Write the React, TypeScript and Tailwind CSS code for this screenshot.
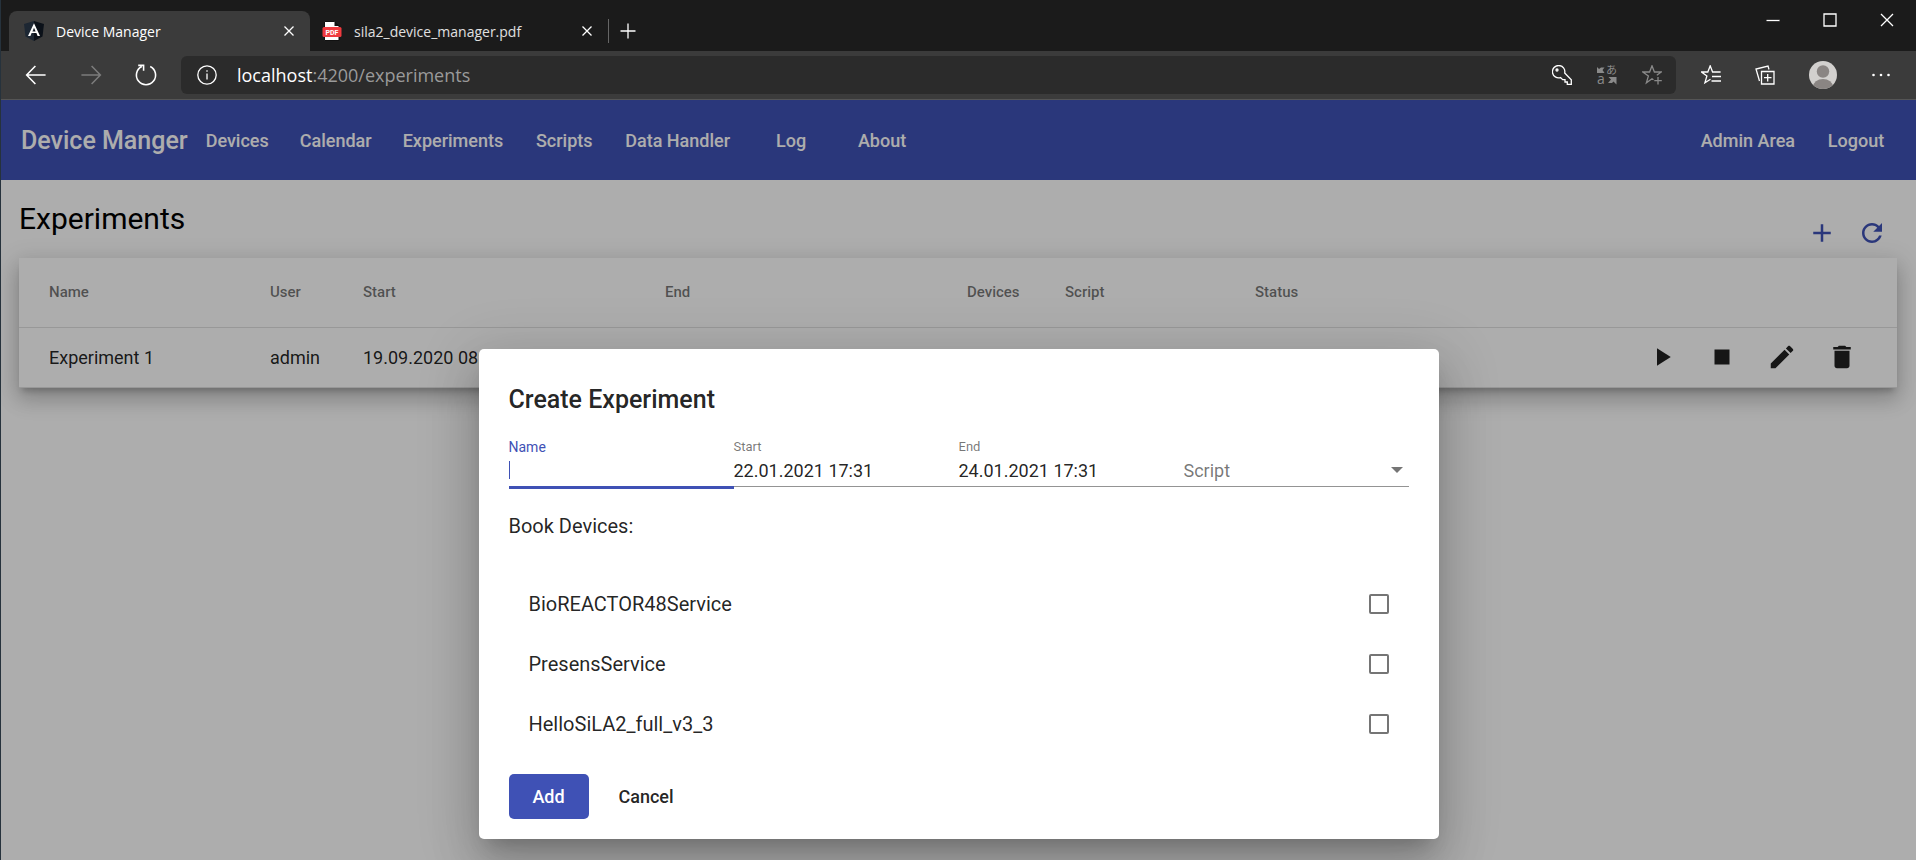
import type { ReactNode } from "react";

const ICONS = {
  add: "M19 13h-6v6h-2v-6H5v-2h6V5h2v6h6v2z",
  refresh:
    "M17.65 6.35C16.2 4.9 14.21 4 12 4c-4.42 0-7.99 3.58-7.99 8s3.57 8 7.99 8c3.73 0 6.84-2.55 7.73-6h-2.08c-.82 2.33-3.04 4-5.65 4-3.31 0-6-2.69-6-6s2.69-6 6-6c1.66 0 3.14.69 4.22 1.78L13 11h7V4l-2.35 2.35z",
  play: "M8 5v14l11-7z",
  stop: "M6 6h12v12H6z",
  edit: "M3 17.25V21h3.75L17.81 9.94l-3.75-3.75L3 17.25zM20.71 7.04c.39-.39.39-1.02 0-1.41l-2.34-2.34c-.39-.39-1.02-.39-1.41 0l-1.83 1.83 3.75 3.75 1.83-1.83z",
  remove: "M6 19c0 1.1.9 2 2 2h8c1.1 0 2-.9 2-2V7H6v12zM19 4h-3.5l-1-1h-5l-1 1H5v2h14V4z",
};

function MatIconButton({ icon, label }: { icon: keyof typeof ICONS; label: string }) {
  return (
    <button type="button" aria-label={label} className="flex size-[50px] items-center justify-center rounded-full">
      <svg viewBox="0 0 24 24" className="size-[30px] fill-current">
        <path d={ICONS[icon]} />
      </svg>
    </button>
  );
}

function Stroke({ children, className = "size-5" }: { children: ReactNode; className?: string }) {
  return (
    <svg viewBox="0 0 20 20" fill="none" stroke="currentColor" strokeWidth="1.3" className={className} aria-hidden="true">
      {children}
    </svg>
  );
}

function AngularLogo() {
  return (
    <svg viewBox="0 0 20 20" className="size-5" aria-hidden="true">
      <path d="M10 0 0 3l1.500 12.400L10 20z" fill="#1d2733" />
      <path d="M10 0l10 3-1.500 12.400L10 20z" fill="#0b1119" />
      <path d="M10 2.200 4 15h2.400l1.200-3h4.800l1.200 3H16zm0 4.500 1.600 3.700H8.400z" fill="#fff" />
    </svg>
  );
}

function PdfIcon() {
  return (
    <svg viewBox="0 0 20 20" className="size-5" aria-hidden="true">
      <path d="M2.500 .5h10l4.500 4.500v14.500h-14.500z" fill="#fff" stroke="#111" strokeWidth="1" />
      <path d="M12.500 .5v4.500h4.500z" fill="#111" />
      <rect x="0.500" y="6" width="19" height="10" rx="1.500" fill="#f03a3f" />
      <text x="10" y="13.500" textAnchor="middle" fontSize="7" fontWeight="700" fill="#fff" fontFamily="Roboto, sans-serif">
        PDF
      </text>
    </svg>
  );
}

function CloseGlyph() {
  return (
    <Stroke>
      <path d="M5.500 5.500l9 9M14.500 5.500l-9 9" />
    </Stroke>
  );
}

function BrowserChrome() {
  return (
    <header className="border-b border-[#555] bg-[#1b1b1b] font-['Open_Sans',sans-serif] text-white">
      <div className="flex h-[51px] items-stretch justify-between">
        <div className="flex items-end pl-2">
          <div className="flex h-10 w-[301px] items-center gap-3 rounded-t-lg bg-[#3b3b3b] pr-[11px] pl-[15px]">
            <AngularLogo />
            <span className="flex-1 text-[14px]">Device Manager</span>
            <button type="button" aria-label="Close Device Manager">
              <CloseGlyph />
            </button>
          </div>
          <div className="flex h-10 w-[298px] items-center gap-3 pr-[11px] pl-3">
            <PdfIcon />
            <span className="flex-1 text-[14px] text-[#e0e0e0]">sila2_device_manager.pdf</span>
            <button type="button" aria-label="Close sila2_device_manager.pdf">
              <CloseGlyph />
            </button>
          </div>
          <div className="flex h-10 items-center gap-[9px]">
            <span className="h-6 w-px bg-[#666]" />
            <button type="button" aria-label="New tab">
              <Stroke>
                <path d="M10 2.500v15M2.500 10h15" />
              </Stroke>
            </button>
          </div>
        </div>
        <div className="flex h-10 items-center gap-[37px] pr-[19px]">
          <button type="button" aria-label="Minimize">
            <Stroke>
              <path d="M3.500 10.500h13" />
            </Stroke>
          </button>
          <button type="button" aria-label="Maximize">
            <Stroke>
              <path d="M4 4h12v12H4z" />
            </Stroke>
          </button>
          <button type="button" aria-label="Close window">
            <Stroke>
              <path d="M4 4l12 12M16 4L4 16" />
            </Stroke>
          </button>
        </div>
      </div>

      <div className="flex h-12 items-center bg-[#3b3b3b] pr-[25px] pl-[23px]">
        <div className="flex items-center gap-[31px] pr-[23px]">
          <button type="button" aria-label="Back">
            <Stroke className="size-6">
              <path d="M18 10H2.500M9.500 2.500l-7.300 7.500 7.300 7.500" />
            </Stroke>
          </button>
          <button type="button" aria-label="Forward" className="text-[#7c7c7c]">
            <Stroke className="size-6">
              <path d="M2 10h15.500M10.500 2.500l7.300 7.500-7.300 7.500" />
            </Stroke>
          </button>
          <button type="button" aria-label="Reload">
            <Stroke className="size-6">
              <path d="M13.500 2.900A8 8 0 1 1 6.500 2.900M3.500 2h4.500v4.500" />
            </Stroke>
          </button>
        </div>
        <div className="flex h-[38px] flex-1 items-center rounded-md bg-[#2b2b2b] pr-[14px] pl-4">
          <Stroke>
            <circle cx="10" cy="10" r="9.200" />
            <path d="M10 8.500v6M10 5.200v1.600" />
          </Stroke>
          <p className="flex-1 pl-5 text-[18px] text-[#9a9a9a]">
            <span className="text-white">localhost</span>:4200/experiments
          </p>
          <div className="flex items-center gap-[25px] text-[#8a8a8a]">
            <button type="button" aria-label="Saved passwords" className="text-white">
              <Stroke>
                <path d="M8.500 12.600A6.200 6.200 0 1 1 12.700 8l6.600 6.800v4.500h-4v-2.300h-2.300v-2.300h-2.300z" />
                <circle cx="5" cy="5" r="1" />
              </Stroke>
            </button>
            <button type="button" aria-label="Translate">
              <svg viewBox="0 0 20 20" className="size-5 overflow-visible fill-current" aria-hidden="true">
                <text x="9" y="9" fontSize="11" fontFamily="Noto Sans CJK JP, sans-serif">
                  あ
                </text>
                <text x="0" y="19" fontSize="14" fontFamily="Open Sans, sans-serif">
                  a
                </text>
                <path d="M0 2l2 2 2-1.500h3.500L5.500 5l2 3H0z M19.500 12h-8l2.500 2.500-3 3.500h4l1.500-1.500 3 3z" />
              </svg>
            </button>
            <button type="button" aria-label="Add to favourites">
              <Stroke>
                <path d="M11.500 14.700 10 13.700l-5.600 4.100 2-6.800L.8 7h6.800L10 .8 12.400 7h6.800l-4.400 3.200M16 12v7.500M12.300 15.700h7.500" />
              </Stroke>
            </button>
          </div>
        </div>
        <div className="flex items-center gap-[34px] pl-[25px]">
          <button type="button" aria-label="Favourites">
            <Stroke>
              <path d="M9.500 14.300l-5.600 3.500 2-6.800L.5 7h6.300L9.200.8 11.600 7h8M11 11.500h9M10.500 16h9.500" />
            </Stroke>
          </button>
          <button type="button" aria-label="Collections">
            <Stroke>
              <path d="M6.500 6.500h12.500v12.500H6.500zM12.700 9v7.500M9 12.700h7.500M4.500 16 1 4l12-3 1 3.500" />
            </Stroke>
          </button>
          <button type="button" aria-label="Profile">
            <svg viewBox="0 0 28 28" className="size-7" aria-hidden="true">
              <clipPath id="avatar">
                <circle cx="14" cy="14" r="14" />
              </clipPath>
              <g clipPath="url(#avatar)">
                <rect width="28" height="28" fill="#d2d0ce" />
                <circle cx="14" cy="10.500" r="6.200" fill="#8a8583" />
                <ellipse cx="14" cy="26" rx="10" ry="8" fill="#8a8583" />
              </g>
            </svg>
          </button>
          <button type="button" aria-label="Settings">
            <svg viewBox="0 0 20 20" className="size-5 fill-current" aria-hidden="true">
              <circle cx="2.500" cy="10" r="1.300" />
              <circle cx="10" cy="10" r="1.300" />
              <circle cx="17.500" cy="10" r="1.300" />
            </svg>
          </button>
        </div>
      </div>
    </header>
  );
}

function NavLink({ children }: { children: string }) {
  return (
    <a href="#" className="min-w-[80px] px-[10px] text-center text-[18px] leading-[45px] font-medium">
      {children}
    </a>
  );
}

const COLUMNS = [
  { name: "Name", width: "w-[251px] pl-[30px]" },
  { name: "User", width: "w-[93px]" },
  { name: "Start", width: "w-[302px]" },
  { name: "End", width: "w-[302px]" },
  { name: "Devices", width: "w-[98px]" },
  { name: "Script", width: "w-[190px]" },
  { name: "Status", width: "w-[190px]" },
];

function ExperimentsPage() {
  return (
    <>
      <nav className="flex h-20 items-center justify-between bg-[#3f51b5] px-5 text-white">
        <div className="flex items-center gap-2">
          <span className="pt-0.5 text-[25px] font-medium">Device Manger</span>
          <div className="flex gap-[11px]">
            {["Devices", "Calendar", "Experiments", "Scripts", "Data Handler", "Log", "About"].map((item) => (
              <NavLink key={item}>{item}</NavLink>
            ))}
          </div>
        </div>
        <div className="flex gap-[11px]">
          <NavLink>Admin Area</NavLink>
          <NavLink>Logout</NavLink>
        </div>
      </nav>

      <main className="pr-[19px] pl-[18px] text-black/87">
        <div className="flex h-[78px] items-end justify-between">
          <h1 className="self-start pt-[19px] text-[30px] leading-10 text-black">Experiments</h1>
          <div className="flex text-[#3f51b5]">
            <MatIconButton icon="add" label="Add experiment" />
            <MatIconButton icon="refresh" label="Refresh" />
          </div>
        </div>
        <table className="w-full table-fixed border-collapse bg-white text-left shadow-[0_6px_6px_-3px_rgba(0,0,0,0.2),0_12px_20px_1px_rgba(0,0,0,0.14),0_5px_22px_4px_rgba(0,0,0,0.12)]">
          <thead>
            <tr className="h-[69px] border-b border-black/12 text-[15px] text-black/54">
              {COLUMNS.map((column) => (
                <th key={column.name} className={`font-medium ${column.width}`}>
                  {column.name}
                </th>
              ))}
              <th aria-label="Actions" />
            </tr>
          </thead>
          <tbody>
            <tr className="h-[60px] border-b border-black/12 text-[18px]">
              <td className="pl-[30px]">Experiment 1</td>
              <td>admin</td>
              <td>19.09.2020 08:00</td>
              <td />
              <td />
              <td />
              <td />
              <td className="pr-[30px]">
                <div className="flex justify-end gap-[10px]">
                  <MatIconButton icon="play" label="Run" />
                  <MatIconButton icon="stop" label="Stop" />
                  <MatIconButton icon="edit" label="Edit" />
                  <MatIconButton icon="remove" label="Delete" />
                </div>
              </td>
            </tr>
          </tbody>
        </table>
      </main>
    </>
  );
}

function DateField({ id, label, value }: { id: string; label: string; value: string }) {
  return (
    <div className="flex flex-col border-b border-black/42">
      <label htmlFor={id} className="text-[13px] leading-[18px] text-black/54">
        {label}
      </label>
      <input id={id} defaultValue={value} className="h-[30px] w-full pb-0.5 text-[18px] outline-none" />
    </div>
  );
}

function CreateExperimentDialog() {
  return (
    <form
      role="dialog"
      aria-labelledby="dialog-title"
      className="w-[960px] max-w-full rounded-[5px] bg-white px-[30px] pt-[31px] pb-5 text-black/87 shadow-[0_14px_19px_-9px_rgba(0,0,0,0.2),0_30px_48px_4px_rgba(0,0,0,0.14),0_11px_58px_10px_rgba(0,0,0,0.12)]"
    >
      <h2 id="dialog-title" className="text-[25px] leading-10 font-medium">
        Create Experiment
      </h2>
      <div className="grid h-[69px] grid-cols-4 items-start pt-[18px]">
        <div className="flex flex-col border-b-[3px] border-[#3f51b5]">
          <label htmlFor="name" className="text-[14px] leading-[18px] text-[#3f51b5]">
            Name
          </label>
          <div className="flex h-[30px] items-center pb-0.5">
            <span className="h-[18px] w-px bg-[#3f51b5]" />
            <input id="name" className="min-w-0 flex-1 text-[18px] outline-none" />
          </div>
        </div>
        <DateField id="start" label="Start" value="22.01.2021 17:31" />
        <DateField id="end" label="End" value="24.01.2021 17:31" />
        <div className="relative flex border-b border-black/42 pt-[18px]">
          <select aria-label="Script" className="h-[30px] w-full appearance-none bg-transparent pb-0.5 text-[18px] text-black/54 outline-none">
            <option>Script</option>
          </select>
          <svg viewBox="0 0 12 6" className="pointer-events-none absolute right-[6px] bottom-[13px] h-[6px] w-3 fill-black/54" aria-hidden="true">
            <path d="M0 0h12L6 6z" />
          </svg>
        </div>
      </div>
      <h3 className="pt-[22px] text-[20px] leading-[30px]">Book Devices:</h3>
      <ul className="pt-[33px]">
        {["BioREACTOR48Service", "PresensService", "HelloSiLA2_full_v3_3"].map((device) => (
          <li key={device}>
            <label className="flex h-[60px] items-center justify-between px-5 text-[20px]">
              {device}
              <input type="checkbox" className="size-5 appearance-none rounded-[2px] border-2 border-black/54" />
            </label>
          </li>
        ))}
      </ul>
      <div className="flex gap-[10px] pt-5">
        <button type="button" className="h-[45px] w-20 rounded-[5px] bg-[#3f51b5] text-[18px] font-medium text-white">
          Add
        </button>
        <button type="button" className="h-[45px] px-5 text-[18px] font-medium">
          Cancel
        </button>
      </div>
    </form>
  );
}

export default function App() {
  return (
    <div className="flex h-screen flex-col overflow-hidden border-l border-[#26323c] bg-white font-['Roboto',sans-serif]">
      <BrowserChrome />
      <div className="relative flex-1">
        <ExperimentsPage />
        <div className="absolute inset-0 flex items-start justify-center overflow-hidden bg-black/32 pt-[249px]">
          <CreateExperimentDialog />
        </div>
      </div>
    </div>
  );
}
